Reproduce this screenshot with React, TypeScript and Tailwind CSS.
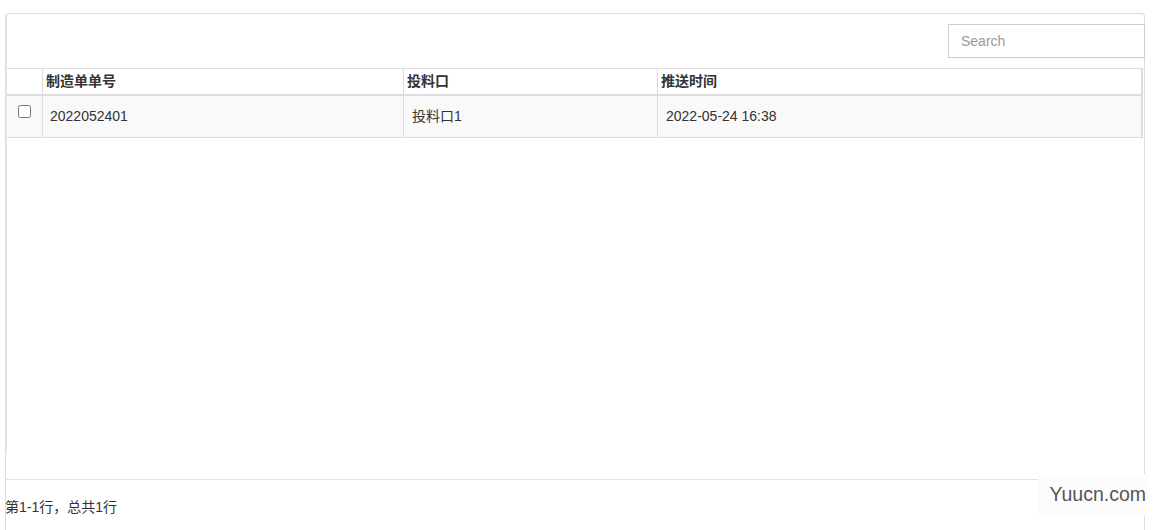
export default function App() {
  const font = { fontFamily: '"Liberation Sans", "Noto Sans CJK SC", Arial, sans-serif' }
  return (
    <div className="relative w-[1158px] h-[530px] bg-white pl-[5px] pt-[13px] overflow-hidden text-[#333]" style={font}>
      <div className="w-[1140px] h-[517px] border-x border-t border-[#dddddd] rounded-t-[4px] flex flex-col">
        {/* table container */}
        <div className="h-[438px] border-l border-[#e6e6e6] flex flex-col">
          {/* toolbar */}
          <div className="h-[54px] flex justify-end items-start pt-[10px]">
            <input
              placeholder="Search"
              className="w-[197px] h-[34px] -mr-px border border-[#cccccc] px-3 text-[14px] text-[#555] placeholder:text-[#999] outline-none"
            />
          </div>
          {/* table */}
          <div className="border-t border-[#dddddd] mr-px">
            <div className="grid grid-cols-[36px_361px_254px_1fr] h-[27px] border-b-2 border-r-2 border-[#dddddd] text-[14px] font-bold">
              <div className="border-r border-[#dddddd]" />
              <div className="border-r border-[#dddddd] pl-[3px] flex items-center">制造单单号</div>
              <div className="border-r border-[#dddddd] pl-[3px] flex items-center">投料口</div>
              <div className="pl-[3px] flex items-center">推送时间</div>
            </div>
            <div className="grid grid-cols-[36px_361px_254px_1fr] h-[42px] bg-[#f9f9f9] border-b border-r-2 border-[#dddddd] text-[14px]">
              <div className="border-r border-[#dddddd] flex justify-center pt-[9px]">
                <input type="checkbox" className="w-[13px] h-[13px] ml-[-1px]" />
              </div>
              <div className="border-r border-[#dddddd] pl-[7px] flex items-center">2022052401</div>
              <div className="border-r border-[#dddddd] pl-[8px] flex items-center">投料口1</div>
              <div className="pl-[8px] flex items-center">2022-05-24 16:38</div>
            </div>
          </div>
        </div>
        {/* pagination */}
        <div className="h-[27px]" />
        <div className="border-t border-[#e3e3e3] -ml-px">
          <div className="pt-[17px] text-[14px] leading-[20px]">第1-1行，总共1行</div>
        </div>
      </div>
      {/* watermark */}
      <div className="absolute left-[1038px] top-[474px] w-[110px] h-[42px] bg-[#fcfcfc] flex items-center justify-end pr-[2px]">
        <span className="text-[19.5px] text-[#555]">Yuucn.com</span>
      </div>
    </div>
  )
}
